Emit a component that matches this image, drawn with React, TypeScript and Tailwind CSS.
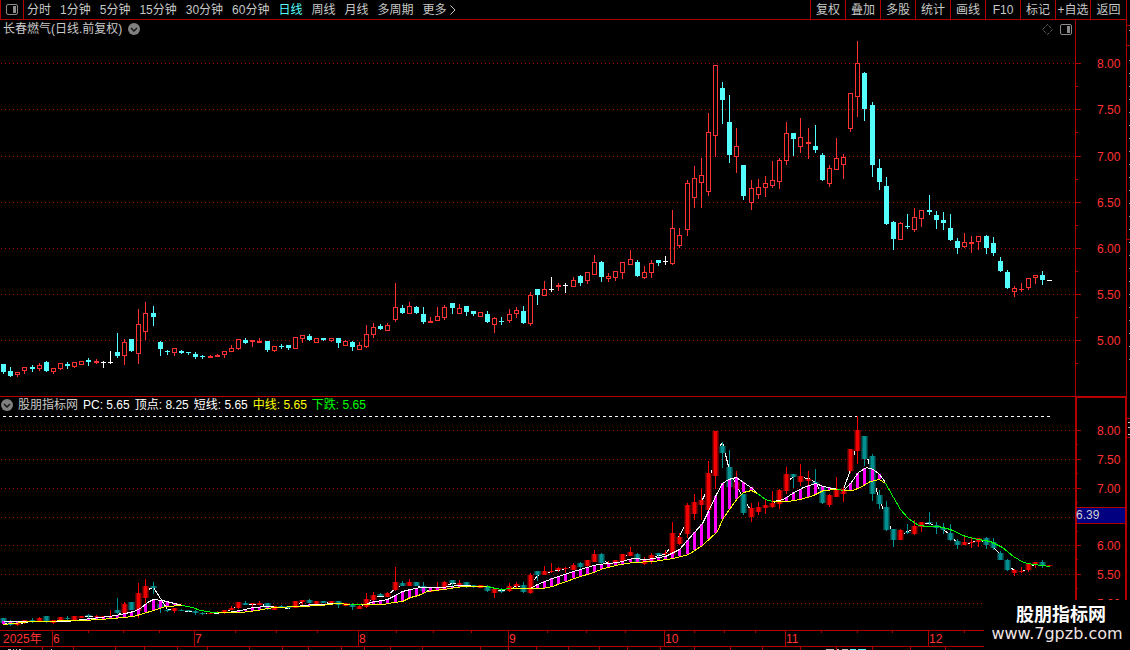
import React from "react";

type Kind = "r" | "c" | "w";
type Candle = [number, number, number, number, number, Kind];
type Point = [number, number];

// x, high, body top, body bottom, low, kind
const candles: Candle[] = [
  [3, 364, 364, 372, 374, "c"], [10, 367, 371, 376, 377, "c"], [17, 372, 372, 375, 377, "r"], [24, 367, 367, 371, 374, "r"],
  [32, 365, 367, 369, 372, "c"], [39, 363, 365, 369, 371, "r"], [46, 361, 362, 371, 372, "c"], [53, 368, 368, 372, 374, "r"],
  [60, 363, 363, 369, 370, "r"], [67, 362, 364, 366, 369, "c"], [74, 362, 362, 367, 368, "r"], [81, 361, 361, 365, 365, "r"],
  [88, 358, 360, 362, 366, "c"], [96, 359, 361, 363, 364, "r"], [103, 361, 362, 363, 368, "w"], [110, 351, 362, 363, 364, "w"],
  [117, 333, 352, 356, 358, "c"], [124, 339, 342, 356, 365, "r"], [131, 339, 339, 351, 352, "c"], [138, 309, 324, 354, 364, "r"],
  [145, 302, 313, 332, 340, "r"], [153, 306, 313, 317, 326, "c"], [160, 341, 342, 349, 356, "c"], [167, 350, 351, 352, 355, "c"],
  [174, 348, 348, 353, 356, "r"], [181, 350, 351, 353, 354, "c"], [188, 352, 352, 353, 355, "c"], [195, 352, 354, 357, 359, "c"],
  [202, 355, 356, 357, 359, "c"], [210, 355, 356, 358, 358, "r"], [217, 354, 355, 357, 357, "r"], [224, 351, 351, 355, 358, "r"],
  [231, 345, 348, 352, 352, "r"], [238, 339, 339, 349, 350, "r"], [245, 338, 340, 343, 344, "c"], [252, 340, 340, 342, 347, "r"],
  [259, 338, 341, 343, 343, "r"], [267, 341, 341, 350, 352, "c"], [274, 346, 346, 351, 352, "r"], [281, 344, 346, 347, 349, "c"],
  [288, 345, 345, 348, 350, "c"], [295, 337, 337, 349, 349, "r"], [302, 335, 335, 339, 343, "r"], [309, 334, 336, 340, 341, "c"],
  [316, 338, 338, 343, 343, "r"], [323, 338, 338, 340, 341, "c"], [331, 338, 338, 341, 342, "r"], [338, 338, 338, 343, 348, "c"],
  [345, 340, 341, 346, 346, "r"], [352, 341, 342, 347, 351, "c"], [359, 342, 345, 350, 350, "r"], [366, 325, 334, 347, 348, "r"],
  [373, 323, 327, 335, 338, "r"], [380, 324, 326, 329, 330, "c"], [387, 323, 325, 331, 331, "r"], [395, 283, 307, 320, 322, "r"],
  [402, 305, 308, 313, 314, "c"], [409, 302, 306, 314, 314, "r"], [416, 306, 307, 313, 314, "c"], [423, 307, 314, 322, 324, "c"],
  [430, 317, 321, 323, 323, "r"], [437, 307, 316, 321, 321, "r"], [444, 305, 307, 318, 320, "r"], [452, 303, 303, 308, 314, "c"],
  [459, 304, 308, 314, 314, "r"], [466, 306, 306, 312, 316, "c"], [473, 311, 311, 314, 316, "c"], [480, 312, 312, 317, 317, "r"],
  [487, 311, 314, 322, 323, "c"], [494, 317, 318, 325, 333, "r"], [501, 317, 321, 322, 325, "c"], [509, 309, 314, 321, 323, "r"],
  [516, 307, 310, 314, 318, "r"], [523, 306, 311, 323, 324, "c"], [530, 292, 295, 324, 326, "r"], [537, 289, 289, 295, 305, "c"],
  [544, 281, 289, 296, 296, "r"], [551, 277, 289, 290, 292, "w"], [558, 283, 285, 287, 291, "r"], [565, 283, 285, 286, 293, "w"],
  [573, 277, 280, 287, 287, "r"], [580, 275, 276, 283, 286, "c"], [587, 272, 272, 281, 284, "r"], [594, 255, 262, 275, 275, "r"],
  [601, 261, 262, 277, 282, "c"], [608, 273, 276, 279, 282, "r"], [615, 271, 271, 278, 281, "r"], [622, 262, 262, 273, 279, "r"],
  [630, 250, 259, 265, 265, "r"], [637, 260, 262, 276, 277, "c"], [644, 266, 272, 278, 279, "r"], [651, 260, 263, 273, 278, "r"],
  [658, 260, 260, 263, 266, "c"], [665, 256, 261, 262, 265, "w"], [672, 210, 228, 264, 265, "r"], [679, 228, 235, 246, 248, "r"],
  [687, 180, 183, 230, 236, "r"], [694, 166, 178, 198, 208, "r"], [701, 158, 175, 183, 208, "r"], [708, 113, 132, 192, 196, "r"],
  [715, 65, 65, 136, 157, "r"], [722, 82, 88, 100, 124, "c"], [729, 95, 122, 155, 163, "c"], [736, 128, 146, 157, 173, "r"],
  [743, 165, 165, 196, 200, "c"], [751, 180, 188, 203, 210, "r"], [758, 179, 187, 195, 199, "r"], [765, 176, 183, 188, 197, "r"],
  [772, 161, 180, 186, 188, "r"], [779, 158, 160, 182, 189, "r"], [786, 122, 133, 161, 165, "r"], [793, 133, 133, 139, 156, "c"],
  [800, 118, 137, 147, 153, "r"], [808, 128, 142, 144, 159, "r"], [815, 125, 146, 150, 153, "c"], [822, 153, 155, 180, 181, "c"],
  [829, 165, 168, 184, 187, "r"], [836, 138, 158, 170, 170, "r"], [843, 154, 157, 165, 179, "r"], [850, 93, 93, 129, 132, "r"],
  [857, 41, 63, 97, 117, "r"], [864, 72, 73, 109, 121, "c"], [872, 102, 105, 165, 177, "c"], [879, 159, 168, 182, 190, "c"],
  [886, 177, 186, 224, 225, "c"], [893, 221, 222, 239, 250, "c"], [900, 222, 223, 240, 240, "r"], [907, 214, 226, 227, 229, "c"],
  [914, 208, 217, 230, 232, "r"], [921, 210, 210, 219, 227, "r"], [929, 195, 210, 212, 215, "c"], [936, 211, 215, 220, 229, "c"],
  [943, 212, 220, 223, 230, "c"], [950, 214, 228, 240, 241, "c"], [957, 238, 241, 248, 254, "c"], [964, 233, 242, 247, 248, "r"],
  [971, 236, 242, 244, 253, "r"], [978, 236, 236, 242, 250, "r"], [986, 235, 236, 248, 254, "c"], [993, 237, 243, 253, 256, "c"],
  [1000, 257, 261, 271, 272, "c"], [1007, 270, 272, 288, 289, "c"], [1014, 286, 288, 292, 297, "r"], [1021, 283, 289, 290, 292, "r"],
  [1028, 278, 278, 288, 290, "r"], [1035, 275, 275, 278, 284, "r"], [1042, 271, 275, 280, 285, "c"], [1049, 280, 280, 281, 281, "w"],
];

const shortLines: Point[][] = [
  [[3, 621], [67, 621], [82, 619], [100, 617], [115, 615], [125, 613], [133, 611], [140, 608], [147, 602], [153, 599], [162, 600], [170, 602], [182, 605]],
  [[228, 612], [240, 610], [253, 607], [267, 606], [273, 606]],
  [[300, 605], [317, 604], [337, 603]],
  [[366, 604], [370, 602], [387, 599], [395, 595], [402, 591], [410, 589], [420, 587], [442, 587], [458, 585], [483, 586]],
  [[530, 588], [537, 584], [552, 578], [570, 572], [583, 568], [597, 564], [618, 562], [632, 558], [647, 559], [665, 556], [679, 549], [693, 533], [702, 523], [708, 511], [716, 494], [722, 483], [728, 479], [736, 477], [743, 482], [752, 488], [757, 493]],
  [[773, 501], [783, 499], [792, 493], [803, 487], [815, 483], [823, 486], [832, 488], [838, 489]],
  [[843, 490], [850, 483], [858, 472], [866, 467], [873, 469], [879, 474], [885, 482]],
];

const midLines: Point[][] = [
  [[3, 624], [13, 623], [30, 621], [83, 620], [113, 618], [133, 616], [143, 613], [153, 610], [165, 606], [182, 605]],
  [[217, 612], [240, 612], [257, 610], [273, 607], [300, 606], [320, 605], [337, 603], [350, 604]],
  [[360, 604], [383, 604], [393, 602], [402, 601], [410, 597], [418, 595], [427, 591], [443, 589], [463, 586], [487, 586]],
  [[510, 588], [542, 588], [552, 586], [563, 582], [577, 577], [593, 572], [603, 568], [620, 564], [633, 562], [653, 561], [673, 558], [688, 554], [702, 545], [717, 531], [722, 519], [729, 509], [737, 498], [743, 492], [751, 490], [757, 493]],
  [[772, 501], [787, 501], [800, 499], [813, 495], [823, 490], [837, 489]],
  [[843, 490], [852, 490], [860, 487], [870, 481], [879, 479], [885, 483]],
];

const fallLines: Point[][] = [
  [[182, 605], [192, 607], [200, 610], [213, 612], [217, 612]],
  [[350, 604], [360, 604]],
  [[487, 586], [495, 588], [502, 589], [510, 588]],
  [[757, 493], [765, 499], [772, 501]],
  [[837, 489], [843, 490]],
  [[885, 483], [888, 488], [893, 497], [900, 509], [908, 518], [918, 525], [928, 526], [938, 526], [950, 529], [965, 536], [978, 539], [990, 541], [1002, 547], [1013, 556], [1023, 562], [1033, 564], [1050, 566]],
];

const valueAt = (lines: Point[][], x: number): number | null => {
  for (const line of lines) {
    for (let i = 1; i < line.length; i++) {
      const [x0, y0] = line[i - 1];
      const [x1, y1] = line[i];
      if (x >= x0 && x <= x1) return Math.round(y0 + ((y1 - y0) * (x - x0)) / (x1 - x0));
    }
  }
  return null;
};

const project = (y: number) => Math.round(430 + (y - 63) * 0.6235);
const toPoints = (line: Point[]) => line.map(([x, y]) => `${x + 0.5},${y + 0.5}`).join(" ");
const closes = candles.map(([, , top, bottom, , kind]) => project(kind === "c" ? bottom : top));
// two-day average of the close
const fastLine: Point[] = candles.map(([x], i) => [x, Math.round((closes[i] + closes[Math.max(0, i - 1)]) / 2)]);

const priceLevels: [string, number][] = [
  ["8.00", 63], ["7.50", 109], ["7.00", 156], ["6.50", 202], ["6.00", 248], ["5.50", 294], ["5.00", 340],
];
const studyLevels: [string, number][] = [
  ["8.00", 430], ["7.50", 459], ["7.00", 488], ["", 517], ["6.00", 545], ["5.50", 574], ["5.00", 603],
];
const months: [string, number][] = [
  ["6", 52], ["7", 194], ["8", 358], ["9", 508], ["10", 664], ["11", 785], ["12", 928],
];
const weekTicks = [88, 123, 159, 235, 276, 317, 396, 433, 471, 547, 586, 625, 694, 724, 755, 821, 857, 892, 964];
const lowerTicks = [42, 73, 115, 144, 177, 207, 249, 282, 308, 341, 364, 390, 422, 480, 508, 536, 568, 599, 627, 660, 694, 730, 762, 800, 836, 872, 910, 945];

const periods = ["分时", "1分钟", "5分钟", "15分钟", "30分钟", "60分钟", "日线", "周线", "月线", "多周期"];
const tools = ["复权", "叠加", "多股", "统计", "画线", "F10", "标记", "+自选"];

function PanelIcon() {
  return (
    <svg width="12" height="11" viewBox="0 0 12 11" aria-hidden="true">
      <rect x="0.5" y="0.5" width="11" height="10" rx="1.5" fill="none" stroke="#8c8c8c" />
      <rect x="7" y="2" width="3" height="7" fill="#8c8c8c" />
    </svg>
  );
}

function ChevronBadge() {
  return (
    <svg width="12" height="12" viewBox="0 0 12 12" aria-hidden="true">
      <circle cx="6" cy="6" r="6" fill="#808080" />
      <path d="M3 5 L6 8 L9 5" fill="none" stroke="#101010" strokeWidth="1.4" />
    </svg>
  );
}

function PriceCandle({ data }: { data: Candle }) {
  const [x, high, top, bottom, low, kind] = data;
  const height = bottom - top;
  if (kind === "r") {
    return (
      <g fill="#ff3232">
        <rect x={x} y={high} width="1" height={top - high} />
        <rect x={x} y={bottom} width="1" height={low - bottom} />
        {height > 2 ? (
          <rect x={x - 1.5} y={top + 0.5} width="4" height={height - 1} fill="none" stroke="#ff3232" />
        ) : (
          <rect x={x - 2} y={top} width="5" height={height} />
        )}
      </g>
    );
  }
  return (
    <g fill={kind === "c" ? "#54ffff" : "#ffffff"}>
      <rect x={x} y={high} width="1" height={low - high} />
      <rect x={x - 2} y={top} width="5" height={height} />
    </g>
  );
}

function StudyCandle({ data }: { data: Candle }) {
  const [x, high, top, bottom, low, kind] = data;
  const y = project(top);
  const height = Math.max(1, project(bottom) - y);
  const shades = kind === "c" ? ["#003c3c", "#006464", "#009090"] : ["#500000", "#960000", "#f50000"];
  return (
    <g>
      <rect x={x} y={project(high)} width="1" height={Math.max(1, project(low) - project(high))} fill={shades[2]} />
      <rect x={x - 3} y={y} width="7" height={height} fill={shades[0]} />
      <rect x={x - 2} y={y} width="5" height={height} fill={shades[1]} />
      <rect x={x - 1} y={y} width="3" height={height} fill={shades[2]} />
    </g>
  );
}

function GridLine({ y }: { y: number }) {
  return <line x1="1" x2="1075" y1={y + 0.5} y2={y + 0.5} stroke="#a80000" strokeDasharray="1 3" />;
}

function PriceChart() {
  return (
    <svg viewBox="0 20 1126 376" className="block h-auto w-full" shapeRendering="crispEdges" role="img" aria-label="日线">
      {priceLevels.map(([label, y]) => (
        <g key={label}>
          <GridLine y={y} />
          <rect x="1076" y={y} width="5" height="1" fill="#b00000" />
          <rect x="1076" y={y + 23} width="2" height="1" fill="#b00000" />
          <text x="1097" y={y + 5} fontSize="12" fill="#ff3232">{label}</text>
        </g>
      ))}
      <rect x="1075" y="20" width="1" height="376" fill="#b00000" />
      {candles.map((c) => <PriceCandle key={c[0]} data={c} />)}
    </svg>
  );
}

function StudyChart() {
  return (
    <svg viewBox="0 397 1126 253" className="block h-auto w-full" shapeRendering="crispEdges" role="img" aria-label="股朋指标网">
      {studyLevels.map(([label, y]) => (
        <g key={y}>
          <GridLine y={y} />
          <rect x="1077" y={y} width="4" height="1" fill="#b00000" />
          <rect x="1077" y={y + 14} width="1" height="1" fill="#b00000" />
          <text x="1097" y={y + 5} fontSize="12" fill="#ff3232">{label}</text>
        </g>
      ))}
      <rect x="1075" y="397" width="2" height="233" fill="#b00000" />
      <rect x="1125" y="397" width="1" height="233" fill="#b00000" />
      <rect x="1077" y="397" width="48" height="1" fill="#b00000" />
      <rect x="1077" y="507" width="48" height="17" fill="#000080" />
      <rect x="1077" y="507" width="48" height="1" fill="#b00000" />
      <rect x="1077" y="523" width="48" height="1" fill="#b00000" />
      <text x="1076" y="519" fontSize="12" fill="#d0d0d0">6.39</text>

      <line x1="3" x2="1051" y1="416.5" y2="416.5" stroke="#ffffff" strokeDasharray="3 3" />
      <polyline points={toPoints(fastLine)} fill="none" stroke="#ffffff" />
      {candles.map((c) => <StudyCandle key={c[0]} data={c} />)}
      {candles.map(([x]) => {
        const upper = valueAt(shortLines, x);
        const lower = valueAt(midLines, x);
        if (upper === null || lower === null || lower - upper < 2) return null;
        return <rect key={x} x={x - 1} y={upper} width="3" height={lower - upper} fill="#ff00ff" />;
      })}
      {shortLines.map((l, i) => <polyline key={i} points={toPoints(l)} fill="none" stroke="#ffffff" />)}
      {midLines.map((l, i) => <polyline key={i} points={toPoints(l)} fill="none" stroke="#ffff00" />)}
      {fallLines.map((l, i) => <polyline key={i} points={toPoints(l)} fill="none" stroke="#00ff00" />)}

      <g fill="#b00000">
        <rect x="0" y="630" width="1126" height="1" />
        <rect x="0" y="646" width="1126" height="1" />
        {months.map(([m, x]) => <rect key={m} x={x} y="630" width="1" height="16" />)}
        {weekTicks.map((x) => <rect key={x} x={x} y="631" width="1" height="2" />)}
        {lowerTicks.map((x) => <rect key={x} x={x} y="647" width="1" height="3" />)}
      </g>
      <g fontSize="12" fill="#ff3232">
        <text x="3" y="643">2025年</text>
        {months.map(([m, x]) => <text key={m} x={x + 1} y="643">{m}</text>)}
      </g>
      <path d="M8 649.5h3m2 0h1m2 0h1m2 0h2m30 0h1M826 649.5h8m3 0h2m3 0h6" stroke="#c0c0c0" />
      <path d="M850 649.5h6m2 0h8" stroke="#54ffff" />
    </svg>
  );
}

export default function App() {
  return (
    <div className="relative flex min-h-screen overflow-hidden bg-black font-['Liberation_Sans','Noto_Sans_CJK_SC',sans-serif] text-[12px] leading-4 text-[#c8c8c8]">
      <main className="min-w-0 flex-1">
        <header className="flex h-5 items-stretch border-b border-[#b00000]">
          <button aria-label="侧栏" className="flex w-6 shrink-0 items-center justify-center border-x border-[#b00000]">
            <PanelIcon />
          </button>
          <nav className="flex items-center gap-[9px] pl-[3px] whitespace-nowrap">
            {periods.map((p) => (
              <button key={p} className={p === "日线" ? "text-[#54ffff]" : ""}>{p}</button>
            ))}
            <button className="flex items-center gap-[3px]">
              更多
              <svg width="6" height="10" viewBox="0 0 6 10" aria-hidden="true">
                <path d="M0.5 0.5 L5 5 L0.5 9.5" fill="none" stroke="#c8c8c8" />
              </svg>
            </button>
          </nav>
          <div className="ml-auto flex whitespace-nowrap">
            {tools.map((t) => (
              <button key={t} className="flex w-[35px] items-center justify-center border-l border-[#b00000]">{t}</button>
            ))}
            <button className="flex w-9 items-center justify-center border-l border-[#b00000]">返回</button>
          </div>
        </header>

        <section className="relative">
          <PriceChart />
          <div className="absolute top-0 left-[3px] flex h-[18px] items-center gap-1.5">
            <h1>长春燃气(日线.前复权)</h1>
            <button aria-label="展开"><ChevronBadge /></button>
          </div>
          <div className="absolute top-0 right-[54px] flex h-[18px] items-center gap-[7px]">
            <svg width="11" height="11" viewBox="0 0 11 11" aria-hidden="true">
              <path d="M5.5 0.5 L10.5 5.5 L5.5 10.5 L0.5 5.5 Z" fill="none" stroke="#8c8c8c" strokeDasharray="1 1" />
            </svg>
            <button aria-label="面板"><PanelIcon /></button>
          </div>
        </section>

        <section className="relative border-t border-[#c00000]">
          <StudyChart />
          <div className="absolute top-0 left-px flex h-4 items-center gap-[5px] whitespace-nowrap text-white">
            <button aria-label="展开指标"><ChevronBadge /></button>
            <h2 className="text-[#c8c8c8]">股朋指标网</h2>
            <span>PC: 5.65</span>
            <span>顶点: 8.25</span>
            <span>短线: 5.65</span>
            <span className="text-[#ffff00]">中线: 5.65</span>
            <span className="text-[#00ff00]">下跌: 5.65</span>
          </div>
        </section>
      </main>

      <aside className="w-1 shrink-0 border-l border-[#b00000]">
        <svg width="3" height="600" viewBox="0 0 3 600" shapeRendering="crispEdges" aria-hidden="true">
          <path d="M0 25.5h3M0 45.5h3M0 239.5h3M0 418.5h3M0 437.5h3" stroke="#b00000" />
          <path d="M2.5 30v8M2.5 60v300" stroke="#909090" strokeDasharray="1 12" />
          <path d="M1 422.5h2M1 427.5h2M1 434.5h2" stroke="#c8c8c8" />
        </svg>
      </aside>

      <div className="absolute right-0 bottom-0 flex h-[50px] w-[146px] flex-col items-center bg-black pt-1 whitespace-nowrap">
        <strong className="pl-2 text-[18px] leading-[22px] text-white">股朋指标网</strong>
        <a href="http://www.7gpzb.com" className="font-['DejaVu_Sans',sans-serif] text-[16px] leading-4 text-[#f0e4e4]">www.7gpzb.com</a>
      </div>
    </div>
  );
}
